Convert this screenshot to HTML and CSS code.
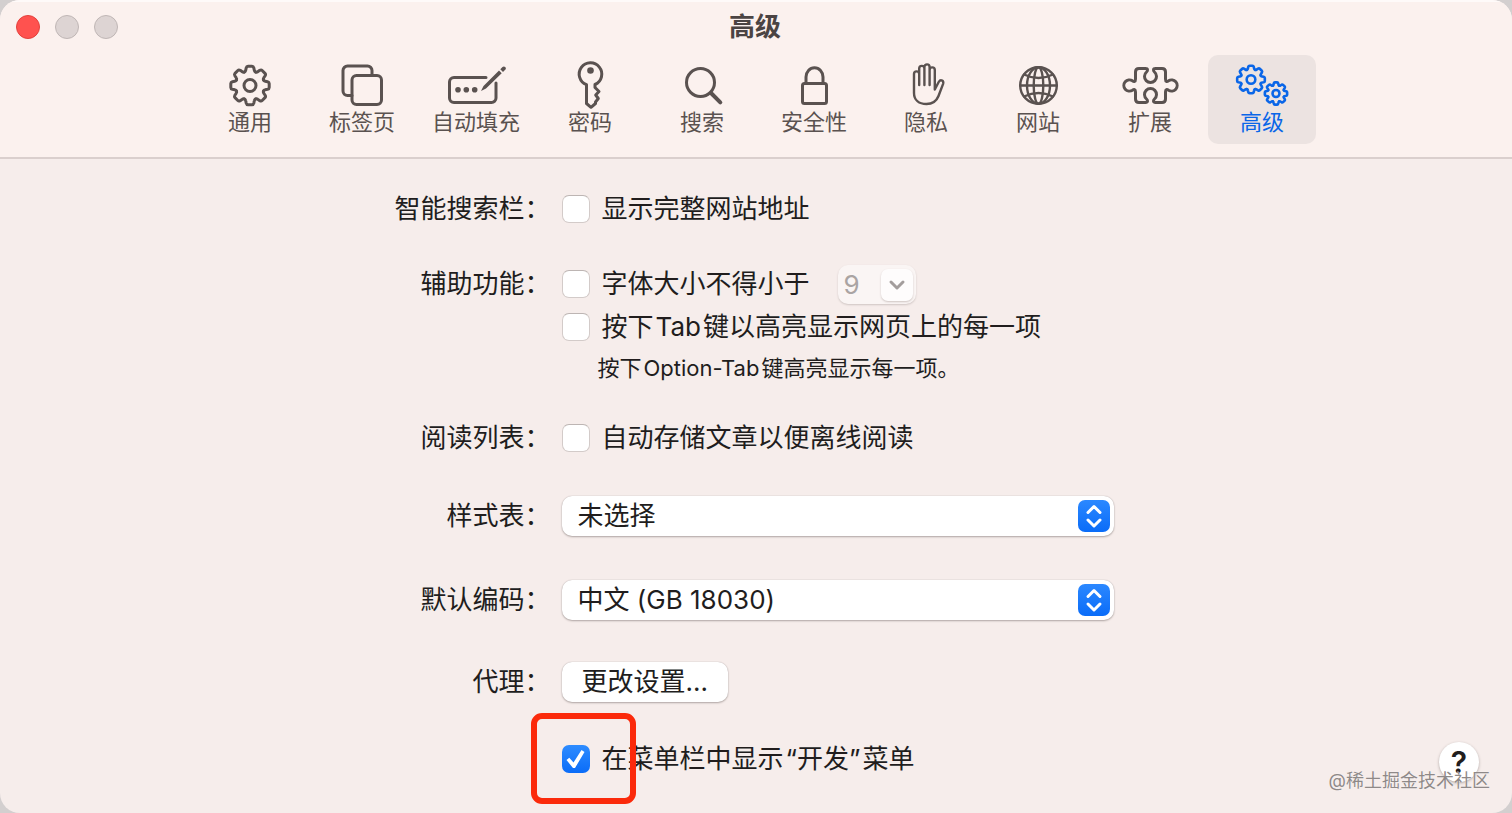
FILE: index.html
```html
<!DOCTYPE html>
<html lang="zh-CN">
<head>
<meta charset="utf-8">
<title>高级</title>
<link rel="stylesheet" href="styles.css">
</head>
<body>
<svg class="defs" aria-hidden="true">
  <defs>
    <path id="tooth" vector-effect="non-scaling-stroke" d="M-5.6-13.5Q-4.5-14-4.3-15.2L-3.8-17.6Q-3.4-19.2-2-19.2H2Q3.4-19.2 3.8-17.6L4.3-15.2Q4.5-14 5.6-13.5"/>
    <g id="gear">
      <use href="#tooth"/>
      <use href="#tooth" transform="rotate(45)"/>
      <use href="#tooth" transform="rotate(90)"/>
      <use href="#tooth" transform="rotate(135)"/>
      <use href="#tooth" transform="rotate(180)"/>
      <use href="#tooth" transform="rotate(225)"/>
      <use href="#tooth" transform="rotate(270)"/>
      <use href="#tooth" transform="rotate(315)"/>
      <circle r="6" vector-effect="non-scaling-stroke"/>
    </g>
    <path id="updown" d="M10 12.500l6-6 6 6M10 20l6 6 6-6"/>
  </defs>
</svg>
<div class="window">
  <header class="header">
    <div class="titlebar">
      <div class="lights">
        <button class="light close" aria-label="关闭"></button>
        <button class="light" aria-label="最小化" disabled></button>
        <button class="light" aria-label="缩放" disabled></button>
      </div>
      <h1 class="title">高级</h1>
    </div>
    <nav class="tabs">
      <button class="tab"><svg class="icon" viewBox="0 0 60 50"><use href="#gear" x="30" y="25.5"/></svg>通用</button>
      <button class="tab"><svg class="icon" viewBox="0 0 60 50"><path d="M20 35.500h-4.500a4.500 4.500 0 0 1-4.500-4.500V10.500A4.500 4.500 0 0 1 15.500 6H35.500a4.500 4.500 0 0 1 4.500 4.500V15"/><rect x="20" y="15.500" width="29.500" height="29" rx="4.500"/></svg>标签页</button>
      <button class="tab wide"><svg class="icon" viewBox="0 0 60 50"><path d="M40 17.500H8a4.500 4.500 0 0 0-4.500 4.500V38a4.500 4.500 0 0 0 4.500 4.500H45.500a4.500 4.500 0 0 0 4.500-4.500V23"/><g class="solid"><circle cx="12" cy="29.700" r="2.800"/><circle cx="20.300" cy="29.700" r="2.800"/><circle cx="28.700" cy="29.700" r="2.800"/><path d="M35 31l2.500-5L53 10.500l2.700 2.700L40 28.500zM54.300 9.300l2.200-2.200a1.900 1.900 0 0 1 2.700 2.700L57 12z"/></g></svg>自动填充</button>
      <button class="tab"><svg class="icon" viewBox="0 0 60 50"><path d="M26.500 24.700A11.300 11.300 0 1 1 35 24.500V27.500L39 31.500L35.700 35L38.300 38.500L35.500 42V43.500L31 47.300L26.500 43.500z"/><circle class="solid" cx="30.500" cy="10.500" r="3.300"/></svg>密码</button>
      <button class="tab"><svg class="icon" viewBox="0 0 60 50"><circle cx="28.500" cy="22.500" r="14"/><path class="thick" d="M39 33l9.300 9.300"/></svg>搜索</button>
      <button class="tab"><svg class="icon" viewBox="0 0 60 50"><rect x="18.500" y="23.500" width="24" height="20" rx="2"/><path d="M22 23V17a8.500 9.300 0 0 1 17 0v6"/></svg>安全性</button>
      <button class="tab"><svg class="icon" viewBox="0 0 60 50"><path class="thin" d="M18 33V14a2.600 2.600 0 0 1 5.200 0V25M23.200 14V8.500a2.600 2.600 0 0 1 5.200 0V25M28.400 9V7a2.600 2.600 0 0 1 5.200 0V25M33.600 10a2.600 2.600 0 0 1 5.200 0V29.500L42.700 22q1.500-2.500 3.500-1.400 1.600 1 .9 3.200L42.500 36C40.500 41 36.500 44 30.500 44 23 44 18 40 18 33"/></svg>隐私</button>
      <button class="tab"><svg class="icon" viewBox="0 0 60 50"><g class="thin"><circle cx="30.500" cy="25.500" r="18.300"/><ellipse cx="30.500" cy="25.500" rx="11.500" ry="18.300"/><ellipse cx="30.500" cy="25.500" rx="4.800" ry="18.300"/><path d="M12.200 25.500H48.800M16 14.500Q30.500 21.500 45 14.500M16 36.500Q30.500 29.500 45 36.500"/></g></svg>网站</button>
      <button class="tab"><svg class="icon" viewBox="0 0 60 50"><path d="M19 8.500H25.500C28 8.500 28 10.500 26.500 12A6 6 0 1 0 34.500 12C33 10.500 33 8.500 35.500 8.500H42Q45.500 8.500 45.500 12V19C45.500 22 47 22 48.500 20.800A5.600 5.600 0 1 1 48.500 30.200C47 29 45.500 29 45.500 32V39Q45.500 42.500 42 42.500H35.500C33 42.500 33 40.500 34.500 39A6 6 0 1 0 26.500 39C28 40.500 28 42.500 25.500 42.500H19Q15.500 42.500 15.500 39V32C15.500 29 14 29 12.500 30.200A5.600 5.600 0 1 1 12.500 20.800C14 22 15.500 22 15.500 19V12Q15.500 8.500 19 8.500z"/></svg>扩展</button>
      <button class="tab active" aria-current="page"><svg class="icon" viewBox="0 0 60 50"><use href="#gear" transform="translate(19 19.500) scale(.72)"/><use href="#gear" transform="translate(44 33.500) scale(.58)"/></svg>高级</button>
    </nav>
  </header>
  <main class="content">
    <form class="form">
      <span class="label">智能搜索栏：</span>
      <label class="check"><input type="checkbox">显示完整网站地址</label>

      <span class="label group">辅助功能：</span>
      <div class="stack group">
        <div class="line">
          <label class="check"><input type="checkbox" id="minsize">字体大小不得小于</label>
          <div class="combo">
            <select aria-label="最小字体大小" disabled><option>9</option></select>
            <span class="combo-button"><svg viewBox="0 0 32 32"><path d="M10 13l6 6 6-6"/></svg></span>
          </div>
        </div>
        <label class="check"><input type="checkbox">按下<span class="latin">Tab</span>键以高亮显示网页上的每一项</label>
        <p class="note">按下<span class="latin">Option-Tab</span>键高亮显示每一项。</p>
      </div>

      <span class="label group">阅读列表：</span>
      <label class="check group"><input type="checkbox">自动存储文章以便离线阅读</label>

      <label class="label sheet-row" for="sheet">样式表：</label>
      <div class="popup sheet-row">
        <select id="sheet"><option>未选择</option></select>
        <svg class="arrows" viewBox="0 0 32 32"><use href="#updown"/></svg>
      </div>

      <label class="label encoding-row" for="encoding">默认编码：</label>
      <div class="popup encoding-row">
        <select id="encoding"><option>中文 (GB 18030)</option></select>
        <svg class="arrows" viewBox="0 0 32 32"><use href="#updown"/></svg>
      </div>

      <span class="label proxy-row">代理：</span>
      <button type="button" class="push proxy-row">更改设置...</button>

      <label class="check last"><input type="checkbox" checked>在菜单栏中显示<span class="latin">“开发”</span>菜单<span class="highlight"></span></label>
    </form>
    <button class="help" aria-label="帮助">?</button>
  </main>
  <div class="watermark">@稀土掘金技术社区</div>
</div>
</body>
</html>
```
FILE: styles.css
```css
* { box-sizing: border-box; }

body {
  margin: 0;
  background: #d3cfcf;
  color: #211d1d;
  font: 26px/40px Inter, "Noto Sans CJK SC", sans-serif;
}

button, select, input { font: inherit; color: inherit; margin: 0; }
button { border: 0; padding: 0; background: none; }

.defs { position: absolute; width: 0; height: 0; }

.window {
  position: relative;
  display: flex;
  flex-direction: column;
  min-height: 100vh;
  overflow: hidden;
  border-radius: 20px;
  background: #f6edeb;
}

.header {
  padding-bottom: 13px;
  border-bottom: 2px solid #dacfcd;
  border-top: 2px solid #fefaf9;
  background: #fbf1ee;
}

.titlebar {
  display: grid;
  grid-template-columns: 1fr auto 1fr;
  align-items: center;
  height: 53px;
  padding: 0 18px 3px 16px;
}

.lights { display: flex; gap: 15px; }

.light {
  width: 24px;
  height: 24px;
  border: 1px solid #bfb6b5;
  border-radius: 50%;
  background: #ddd4d3;
}

.light.close { border-color: #e2423d; background: #ff524f; }

.title { margin: 0; color: #4b4443; font-size: 26px; line-height: 40px; font-weight: 700; }

.tabs { display: flex; justify-content: center; gap: 4px; }

.tab {
  display: flex;
  flex-direction: column;
  align-items: center;
  width: 108px;
  height: 89px;
  padding-top: 5px;
  border-radius: 10px;
  color: #5a5250;
  font-size: 22px;
  line-height: 24px;
}

.tab.wide { width: 112px; }
.tab.active { background: #ece3e1; color: #0a66e8; }

.icon {
  width: 60px;
  height: 50px;
  fill: none;
  stroke: currentColor;
  stroke-width: 3;
  stroke-linejoin: round;
  stroke-linecap: round;
}

.active .icon { stroke-width: 2.6; }
.icon .solid { fill: currentColor; stroke: none; }
.icon .thin { stroke-width: 2.4; }
.icon .thick { stroke-width: 4; }

.content { display: grid; flex: 1; }

.form {
  grid-area: 1 / 1;
  display: grid;
  grid-template-columns: 156px 552px;
  column-gap: 11px;
  justify-content: center;
  align-content: start;
  padding: 30px 4px 32px 0;
}

.label { text-align: right; white-space: nowrap; }
.group { margin-top: 35px; }
.sheet-row { margin-top: 38px; }
.encoding-row { margin-top: 44px; }
.proxy-row { margin-top: 42px; }

.stack { display: flex; flex-direction: column; }
.stack .line + .check { margin-top: 3px; }
.line { display: flex; align-items: center; gap: 28px; }

.check {
  position: relative;
  display: flex;
  align-items: center;
  justify-self: start;
  height: 40px;
  white-space: nowrap;
}

.check input {
  appearance: none;
  width: 28px;
  height: 28px;
  margin-right: 12px;
  border: 1px solid #d3cbc9;
  border-top-color: #bdb5b3;
  border-radius: 7px;
  background: #fff;
}

.check input:checked {
  display: grid;
  place-items: center;
  border: 0;
  background: linear-gradient(#2e8cff, #0a6cf8);
}

.check input:checked::before {
  content: "";
  width: 20px;
  height: 20px;
  background: #fff;
  clip-path: path("M1 11L3.800 8.800 8 13.500 16 1 19 3 9.500 19H7.500z");
}

.latin { margin: 0 2px; }

.note { margin: 6px 0 0 36px; font-size: 22px; line-height: 30px; }

.combo {
  position: relative;
  width: 78px;
  height: 39px;
  border-radius: 10px;
  background: #faf5f4;
  box-shadow: 0 1px 2px #cfc5c3;
}

.combo select {
  appearance: none;
  width: 100%;
  height: 100%;
  padding: 0 0 0 6px;
  border: 0;
  background: none;
  color: #aaa4a3;
  opacity: 1;
}

.combo-button {
  position: absolute;
  top: 4px;
  right: 3px;
  width: 32px;
  height: 32px;
  border-radius: 7px;
  background: #fefcfc;
  box-shadow: 0 1px 2px #cfc5c3;
  pointer-events: none;
}

.combo-button svg, .arrows {
  display: block;
  width: 32px;
  height: 32px;
  fill: none;
  stroke: #a39d9c;
  stroke-width: 3;
  stroke-linecap: round;
  stroke-linejoin: round;
}

.popup { position: relative; height: 40px; }

.popup select {
  appearance: none;
  display: block;
  width: 100%;
  height: 40px;
  padding: 0 48px 0 16px;
  border: 0;
  border-radius: 10px;
  background: #fff;
  box-shadow: 0 1px 2px #b0a6a4, 0 0 1px #b0a6a4;
}

.popup .arrows {
  position: absolute;
  top: 4px;
  right: 4px;
  border-radius: 7px;
  background: linear-gradient(#2b88ff, #0a6cf8);
  stroke: #fff;
  pointer-events: none;
}

.push {
  justify-self: start;
  height: 40px;
  padding: 0 20px;
  border-radius: 10px;
  background: #fff;
  box-shadow: 0 1px 2px #b0a6a4, 0 0 1px #b0a6a4;
}

.check.last { grid-column: 2; margin-top: 37px; }

.highlight {
  position: absolute;
  top: -26px;
  left: -31px;
  width: 105px;
  height: 91px;
  border: 6px solid #fb2a0b;
  border-radius: 11px;
  pointer-events: none;
}

.help {
  grid-area: 1 / 1;
  align-self: end;
  justify-self: end;
  width: 40px;
  height: 40px;
  margin: 0 33px 31px 0;
  border-radius: 50%;
  background: #fff;
  box-shadow: 0 1px 3px #b0a6a4;
  font-size: 30px;
  line-height: 40px;
  font-weight: 600;
}

.watermark {
  position: absolute;
  right: 22px;
  bottom: 20px;
  color: #8f8988;
  font-size: 18px;
  line-height: 24px;
  text-shadow: 0 0 1px #fff;
}
```
